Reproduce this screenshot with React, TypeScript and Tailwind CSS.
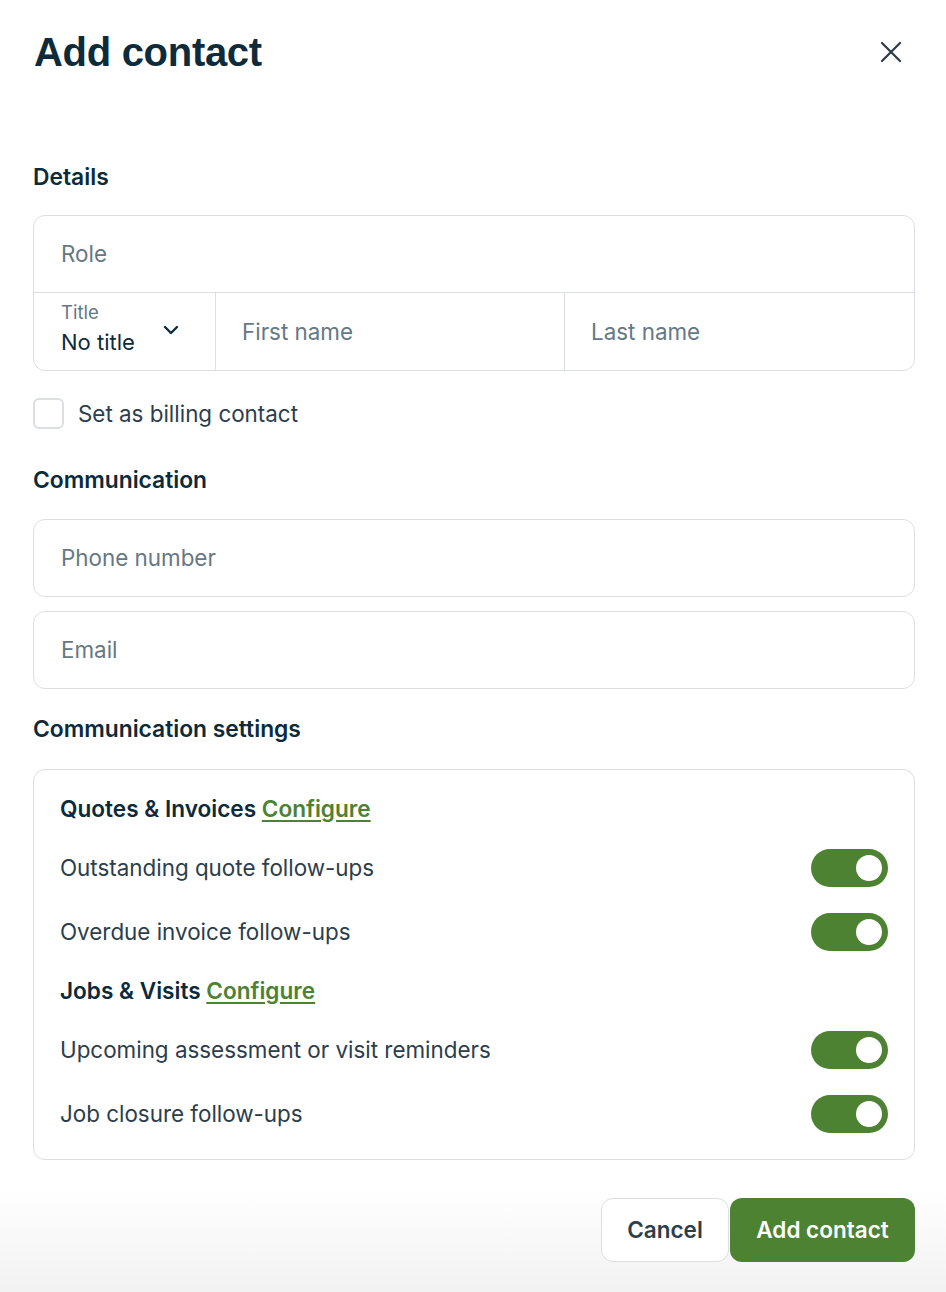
import { X, ChevronDown } from "lucide-react";

const font = { fontFamily: "Inter, 'Noto Sans', sans-serif" };

function Toggle() {
  return (
    <div className="flex h-[38px] w-[77px] shrink-0 items-center justify-end rounded-full bg-[#4d8233] pr-[6px]">
      <div className="h-[26px] w-[26px] rounded-full bg-white" />
    </div>
  );
}

function SettingRow({ label }: { label: string }) {
  return (
    <div className="flex h-[64px] items-center justify-between">
      <span className="text-[22.4px] text-[#2c3e4b]">{label}</span>
      <Toggle />
    </div>
  );
}

export default function App() {
  return (
    <div className="flex min-h-[1292px] w-[946px] flex-col bg-white text-[#0b2a3a]" style={font}>
      {/* Header */}
      <div className="flex items-center justify-between pl-[34px] pr-[37px] pt-[22px]">
        <h1
          className="text-[40px] font-bold tracking-[-0.3px] text-[#0d2b3b]"
          style={{ fontFamily: "'Liberation Sans', Arial, sans-serif" }}
        >
          Add contact
        </h1>
        <X className="h-[36px] w-[36px] text-[#2c3e4b]" strokeWidth={1.5} />
      </div>

      <div className="flex-1 pb-[30px] pl-[33px] pr-[31px]">
        {/* Details */}
        <h2 className="mt-[81px] text-[22.8px] font-semibold leading-[28px]">Details</h2>
        <div className="mt-[24px] overflow-hidden rounded-[12px] border border-[#dcdfe2]">
          <div className="flex h-[76px] items-center px-[27px] text-[22.4px] text-[#657884]">Role</div>
          <div className="flex h-[78px] border-t border-[#dcdfe2]">
            <div className="flex w-[182px] items-center justify-between border-r border-[#dcdfe2] pl-[27px] pr-[32px]">
              <div className="flex flex-col self-start pt-[8px]">
                <span className="text-[18.5px] leading-[22px] text-[#657884]">Title</span>
                <span className="mt-[5px] text-[22px] leading-[28px] text-[#0d2b3b]">No title</span>
              </div>
              <ChevronDown className="mb-[4px] h-[24px] w-[24px] text-[#0d2b3b]" strokeWidth={2.4} />
            </div>
            <div className="flex w-[349px] items-center border-r border-[#dcdfe2] px-[26px] text-[22.4px] text-[#657884]">
              First name
            </div>
            <div className="flex flex-1 items-center px-[26px] text-[22.4px] text-[#657884]">Last name</div>
          </div>
        </div>

        <label className="mt-[26px] flex items-center gap-[14px]">
          <span className="h-[31px] w-[31px] rounded-[6px] border-2 border-[#dcdfe2]" />
          <span className="text-[22.4px] text-[#2c3e4b]">Set as billing contact</span>
        </label>

        {/* Communication */}
        <h2 className="mt-[35px] text-[22.8px] font-semibold leading-[28px]">Communication</h2>
        <div className="mt-[25px] flex h-[78px] items-center rounded-[12px] border border-[#dcdfe2] px-[27px] text-[22.4px] text-[#657884]">
          Phone number
        </div>
        <div className="mt-[14px] flex h-[78px] items-center rounded-[12px] border border-[#dcdfe2] px-[27px] text-[22.4px] text-[#657884]">
          Email
        </div>

        <h2 className="mt-[26px] text-[22.8px] font-semibold leading-[28px]">Communication settings</h2>
        <div className="mt-[26px] rounded-[12px] border border-[#dcdfe2] px-[26px] pb-[13px] pt-[25px]">
          <p className="text-[22.6px] font-semibold leading-[28px]">
            Quotes &amp; Invoices{" "}
            <a className="text-[#4d8233] underline underline-offset-[3px]">Configure</a>
          </p>
          <div className="mt-[13px]">
            <SettingRow label="Outstanding quote follow-ups" />
            <SettingRow label="Overdue invoice follow-ups" />
          </div>
          <p className="mt-[13px] text-[22.6px] font-semibold leading-[28px]">
            Jobs &amp; Visits{" "}
            <a className="text-[#4d8233] underline underline-offset-[3px]">Configure</a>
          </p>
          <div className="mt-[13px]">
            <SettingRow label="Upcoming assessment or visit reminders" />
            <SettingRow label="Job closure follow-ups" />
          </div>
        </div>
      </div>

      {/* Footer */}
      <div className="flex justify-end bg-gradient-to-b from-white to-[#f2f2f2] px-[31px] pb-[30px] pt-[8px]">
        <div className="flex">
          <button className="h-[64px] w-[128px] rounded-[12px] border border-[#dcdfe2] bg-white text-[22.5px] font-semibold text-[#2c3e4b]">
            Cancel
          </button>
          <button className="ml-[1px] h-[64px] w-[185px] rounded-[12px] bg-[#4d8233] text-[22.5px] font-semibold text-white">
            Add contact
          </button>
        </div>
      </div>
    </div>
  );
}
